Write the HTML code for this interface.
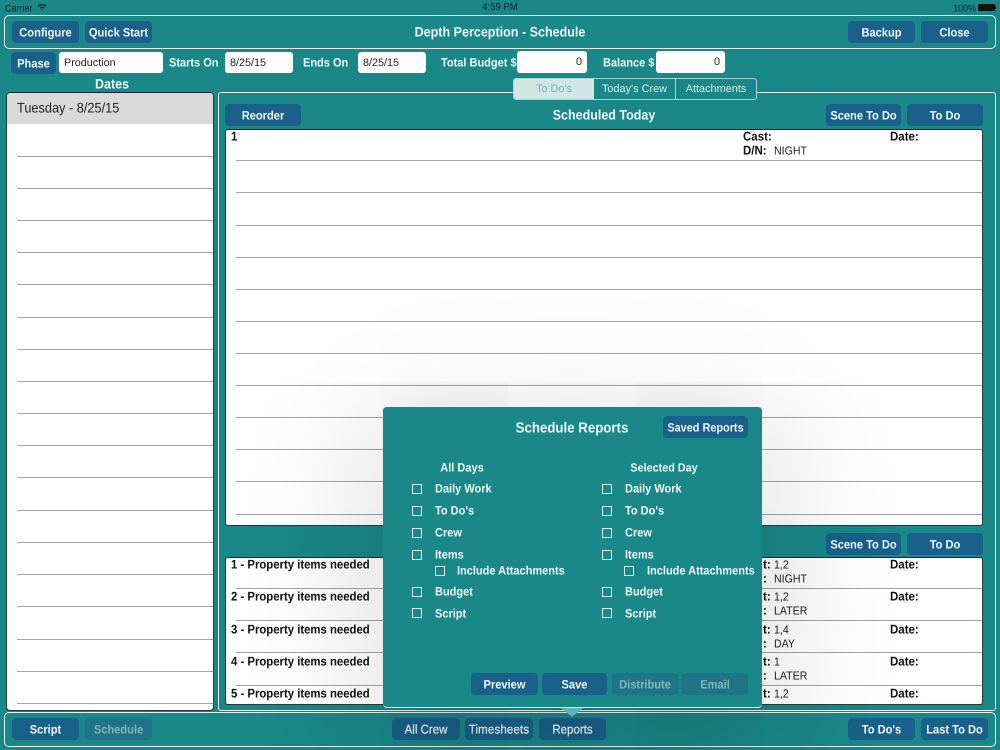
<!DOCTYPE html>
<html>
<head>
<meta charset="utf-8">
<style>
html,body{margin:0;padding:0;width:1000px;height:750px;overflow:hidden;background:#1a8788;}
body{position:relative;font-family:"Liberation Sans",sans-serif;color:#fff;text-rendering:geometricPrecision;}
.a{position:absolute;}
.t{position:absolute;white-space:nowrap;font-weight:bold;font-size:11px;line-height:16px;color:#eef8f8;transform:scaleY(1.1);}
.c{transform:translateX(-50%) scaleY(1.1);}
.k{color:#111;}
.n{font-weight:normal;color:#222;}
.s{font-size:11.5px;}
.u{font-size:10.6px;}
.b{position:absolute;height:20px;line-height:22px;text-align:center;background:#19618a;border-radius:4px;font-weight:bold;font-size:11.1px;color:#eef6f8;white-space:nowrap;transform:scaleY(1.1);transform-origin:top;}
.m{font-weight:normal;font-size:11.5px;-webkit-text-stroke:.2px #eef6f8;}
.d{background:#1f7488;color:#7fb5b8;}
.i{position:absolute;top:52px;height:21px;background:#fff;border-radius:3px;color:#222;font-size:10.8px;line-height:22px;padding:0 5px;box-sizing:border-box;}
.r{text-align:right;}
.box{position:absolute;border:1.5px solid #e8f4f4;border-radius:5px;box-sizing:border-box;}
.l{position:absolute;height:1px;background:#a5a5a5;}
.cb{position:absolute;width:8px;height:8px;border:1.5px solid #dcefef;box-sizing:content-box;}
.tab{position:absolute;top:79px;height:20px;line-height:20px;text-align:center;font-size:10.9px;font-weight:normal;color:#d8eeee;white-space:nowrap;}
.w{position:absolute;background:#fff;border:1px solid #1a3d3d;border-top-color:#123;box-sizing:border-box;}
</style>
</head>
<body>
<!-- status bar -->
<div class="t" style="left:5px;top:0;font-weight:normal;font-size:9px;color:#123;">Carrier</div>
<svg class="a" style="left:37px;top:3px" width="10" height="8" viewBox="0 0 10 8"><path d="M0.5 2.6C3 0.4 7 0.4 9.5 2.6L8.5 3.7C6.5 2 3.5 2 1.5 3.7ZM2.4 4.6C3.9 3.4 6.1 3.4 7.6 4.6L6.6 5.6C5.7 4.9 4.3 4.9 3.4 5.6ZM4.2 6.5C4.7 6.2 5.3 6.2 5.8 6.5L5 7.5Z" fill="#123"/></svg>
<div class="t c" style="left:500px;top:0;font-size:9.5px;font-weight:normal;color:#123;">4:59 PM</div>
<div class="t" style="left:953px;top:0;font-size:9px;font-weight:normal;color:#123;">100%</div>
<div class="a" style="left:978px;top:4px;width:17px;height:7px;background:#111;border-radius:1px;"></div>
<div class="a" style="left:995px;top:6px;width:1px;height:3px;background:#111;"></div>

<!-- top bar -->
<div class="box" style="left:4px;top:15px;width:992px;height:34px;"></div>
<div class="b" style="left:12px;top:21px;width:67px;">Configure</div>
<div class="b" style="left:85px;top:21px;width:67px;">Quick Start</div>
<div class="t c" style="left:500px;top:24px;font-size:12.55px;">Depth Perception - Schedule</div>
<div class="b" style="left:848px;top:21px;width:67px;">Backup</div>
<div class="b" style="left:921px;top:21px;width:67px;">Close</div>

<!-- fields row -->
<div class="b" style="left:11px;top:52px;width:45px;">Phase</div>
<div class="i" style="left:59px;width:104px;">Production</div>
<div class="t" style="left:169px;top:55px;">Starts On</div>
<div class="i" style="left:225px;width:68px;">8/25/15</div>
<div class="t" style="left:303px;top:55px;">Ends On</div>
<div class="i" style="left:358px;width:68px;">8/25/15</div>
<div class="t" style="left:441px;top:55px;">Total Budget $</div>
<div class="i r" style="left:517px;width:70px;top:51px;height:22px;">0</div>
<div class="t" style="left:603px;top:55px;">Balance $</div>
<div class="i r" style="left:656px;width:69px;top:51px;height:22px;">0</div>

<!-- dates -->
<div class="t c" style="left:112px;top:76px;font-size:12.5px;">Dates</div>
<div class="w" style="left:6px;top:92px;width:208px;height:619px;border-radius:4px;overflow:hidden;">
  <div class="a" style="left:0;top:0;width:206px;height:31px;background:#d9d9d9;"></div>
</div>
<div class="t n" style="left:17px;top:100px;font-size:12.75px;">Tuesday - 8/25/15</div>
<div class="l" style="left:17px;width:196px;top:156px"></div>
<div class="l" style="left:17px;width:196px;top:188px"></div>
<div class="l" style="left:17px;width:196px;top:220px"></div>
<div class="l" style="left:17px;width:196px;top:252px"></div>
<div class="l" style="left:17px;width:196px;top:284px"></div>
<div class="l" style="left:17px;width:196px;top:317px"></div>
<div class="l" style="left:17px;width:196px;top:349px"></div>
<div class="l" style="left:17px;width:196px;top:381px"></div>
<div class="l" style="left:17px;width:196px;top:413px"></div>
<div class="l" style="left:17px;width:196px;top:445px"></div>
<div class="l" style="left:17px;width:196px;top:477px"></div>
<div class="l" style="left:17px;width:196px;top:510px"></div>
<div class="l" style="left:17px;width:196px;top:542px"></div>
<div class="l" style="left:17px;width:196px;top:574px"></div>
<div class="l" style="left:17px;width:196px;top:606px"></div>
<div class="l" style="left:17px;width:196px;top:639px"></div>
<div class="l" style="left:17px;width:196px;top:671px"></div>
<div class="l" style="left:17px;width:196px;top:703px"></div>

<!-- right panel -->
<div class="box" style="left:218px;top:92px;width:778px;height:619px;border-radius:3px;"></div>
<div class="a" style="left:513px;top:78px;width:244px;height:22px;background:#1a8788;border:1px solid #a8d2d2;border-radius:3px;box-sizing:border-box;"></div>
<div class="a" style="left:514px;top:79px;width:80px;height:20px;background:#d0e7e6;border-radius:2px 0 0 2px;"></div>
<div class="a" style="left:675px;top:79px;width:1px;height:20px;background:#a8d2d2;"></div>
<div class="tab" style="left:514px;width:80px;color:#6fb4b5;">To Do's</div>
<div class="tab" style="left:594px;width:81px;">Today's Crew</div>
<div class="tab" style="left:676px;width:80px;">Attachments</div>

<div class="b" style="left:225px;top:104px;width:76px;">Reorder</div>
<div class="t c" style="left:604px;top:107px;font-size:12.5px;">Scheduled Today</div>
<div class="b" style="left:826px;top:104px;width:75px;">Scene To Do</div>
<div class="b" style="left:907px;top:104px;width:76px;">To Do</div>

<!-- main table -->
<div class="w" style="left:225px;top:129px;width:758px;height:397px;border-radius:3px;"></div>
<div class="t k s" style="left:231px;top:129px;">1</div>
<div class="t k s" style="left:743px;top:129px;">Cast:</div>
<div class="t k s" style="left:890px;top:129px;">Date:</div>
<div class="t k s" style="left:743px;top:143px;">D/N:</div>
<div class="t n u" style="left:774px;top:143px;">NIGHT</div>
<div class="l" style="left:236px;width:746px;top:160px"></div>
<div class="l" style="left:236px;width:746px;top:192px"></div>
<div class="l" style="left:236px;width:746px;top:225px"></div>
<div class="l" style="left:236px;width:746px;top:257px"></div>
<div class="l" style="left:236px;width:746px;top:289px"></div>
<div class="l" style="left:236px;width:746px;top:321px"></div>
<div class="l" style="left:236px;width:746px;top:353px"></div>
<div class="l" style="left:236px;width:746px;top:385px"></div>
<div class="l" style="left:236px;width:746px;top:417px"></div>
<div class="l" style="left:236px;width:746px;top:449px"></div>
<div class="l" style="left:236px;width:746px;top:481px"></div>
<div class="l" style="left:236px;width:746px;top:514px"></div>

<div class="b" style="left:826px;top:533px;width:75px;">Scene To Do</div>
<div class="b" style="left:907px;top:533px;width:76px;">To Do</div>

<!-- items table -->
<div class="w" style="left:225px;top:557px;width:758px;height:148px;border-radius:3px;"></div>
<div class="t k" style="left:231px;top:557px;font-size:11.35px;">1 - Property items needed</div>
<div class="t k" style="left:231px;top:589px;font-size:11.35px;">2 - Property items needed</div>
<div class="t k" style="left:231px;top:622px;font-size:11.35px;">3 - Property items needed</div>
<div class="t k" style="left:231px;top:654px;font-size:11.35px;">4 - Property items needed</div>
<div class="t k" style="left:231px;top:686px;font-size:11.35px;">5 - Property items needed</div>
<div class="l" style="left:236px;width:746px;top:588px"></div>
<div class="l" style="left:236px;width:746px;top:620px"></div>
<div class="l" style="left:236px;width:746px;top:652px"></div>
<div class="l" style="left:236px;width:746px;top:685px"></div>

<div class="t k s" style="left:763px;top:557px;">t:</div><div class="t n u" style="left:774px;top:557px;">1,2</div><div class="t k s" style="left:890px;top:557px;">Date:</div>
<div class="t k s" style="left:763px;top:571px;">:</div><div class="t n u" style="left:774px;top:571px;">NIGHT</div>
<div class="t k s" style="left:763px;top:589px;">t:</div><div class="t n u" style="left:774px;top:589px;">1,2</div><div class="t k s" style="left:890px;top:589px;">Date:</div>
<div class="t k s" style="left:763px;top:603px;">:</div><div class="t n u" style="left:774px;top:603px;">LATER</div>
<div class="t k s" style="left:763px;top:622px;">t:</div><div class="t n u" style="left:774px;top:622px;">1,4</div><div class="t k s" style="left:890px;top:622px;">Date:</div>
<div class="t k s" style="left:763px;top:636px;">:</div><div class="t n u" style="left:774px;top:636px;">DAY</div>
<div class="t k s" style="left:763px;top:654px;">t:</div><div class="t n u" style="left:774px;top:654px;">1</div><div class="t k s" style="left:890px;top:654px;">Date:</div>
<div class="t k s" style="left:763px;top:668px;">:</div><div class="t n u" style="left:774px;top:668px;">LATER</div>
<div class="t k s" style="left:763px;top:686px;">t:</div><div class="t n u" style="left:774px;top:686px;">1,2</div><div class="t k s" style="left:890px;top:686px;">Date:</div>

<!-- bottom bar -->
<div class="box" style="left:4px;top:712px;width:992px;height:35px;"></div>
<div class="b" style="left:12px;top:718px;width:67px;">Script</div>
<div class="b d" style="left:85px;top:718px;width:67px;">Schedule</div>
<div class="b m" style="left:392px;top:718px;width:68px;">All Crew</div>
<div class="b m" style="left:465px;top:718px;width:68px;letter-spacing:.15px;">Timesheets</div>
<div class="b m" style="left:539px;top:718px;width:67px;">Reports</div>
<div class="b" style="left:848px;top:718px;width:67px;">To Do's</div>
<div class="b" style="left:921px;top:718px;width:67px;">Last To Do</div>

<!-- popover -->
<div class="a" style="left:383px;top:406px;width:379px;height:302px;background:#1a8788;border-radius:4px;border-top:1px solid #e6f2f2;border-bottom:1px solid #e6f2f2;box-sizing:border-box;box-shadow:0 20px 130px 10px rgba(0,0,0,.2);"></div>
<div class="a" style="left:561px;top:708px;width:0;height:0;border-left:11px solid transparent;border-right:11px solid transparent;border-top:9px solid #5fb4b6;"></div>

<div class="t c" style="left:572px;top:420px;font-size:13.25px;">Schedule Reports</div>
<div class="b" style="left:663px;top:416px;width:85px;font-size:10.9px;">Saved Reports</div>
<div class="t c" style="left:462px;top:460px;">All Days</div>
<div class="t c" style="left:664px;top:460px;font-size:10.8px;">Selected Day</div>

<div class="cb" style="left:412px;top:484px"></div><div class="t" style="left:435px;top:481px;">Daily Work</div>
<div class="cb" style="left:412px;top:506px"></div><div class="t" style="left:435px;top:503px;">To Do's</div>
<div class="cb" style="left:412px;top:528px"></div><div class="t" style="left:435px;top:525px;">Crew</div>
<div class="cb" style="left:412px;top:550px"></div><div class="t" style="left:435px;top:547px;">Items</div>
<div class="cb" style="left:435px;top:566px"></div><div class="t" style="left:457px;top:563px;">Include Attachments</div>
<div class="cb" style="left:412px;top:587px"></div><div class="t" style="left:435px;top:584px;">Budget</div>
<div class="cb" style="left:412px;top:608px"></div><div class="t" style="left:435px;top:606px;">Script</div>

<div class="cb" style="left:602px;top:484px"></div><div class="t" style="left:625px;top:481px;">Daily Work</div>
<div class="cb" style="left:602px;top:506px"></div><div class="t" style="left:625px;top:503px;">To Do's</div>
<div class="cb" style="left:602px;top:528px"></div><div class="t" style="left:625px;top:525px;">Crew</div>
<div class="cb" style="left:602px;top:550px"></div><div class="t" style="left:625px;top:547px;">Items</div>
<div class="cb" style="left:624px;top:566px"></div><div class="t" style="left:647px;top:563px;">Include Attachments</div>
<div class="cb" style="left:602px;top:587px"></div><div class="t" style="left:625px;top:584px;">Budget</div>
<div class="cb" style="left:602px;top:608px"></div><div class="t" style="left:625px;top:606px;">Script</div>

<div class="b" style="left:471px;top:673px;width:67px;">Preview</div>
<div class="b" style="left:542px;top:673px;width:65px;">Save</div>
<div class="b d" style="left:612px;top:673px;width:66px;">Distribute</div>
<div class="b d" style="left:682px;top:673px;width:66px;">Email</div>
</body>
</html>
